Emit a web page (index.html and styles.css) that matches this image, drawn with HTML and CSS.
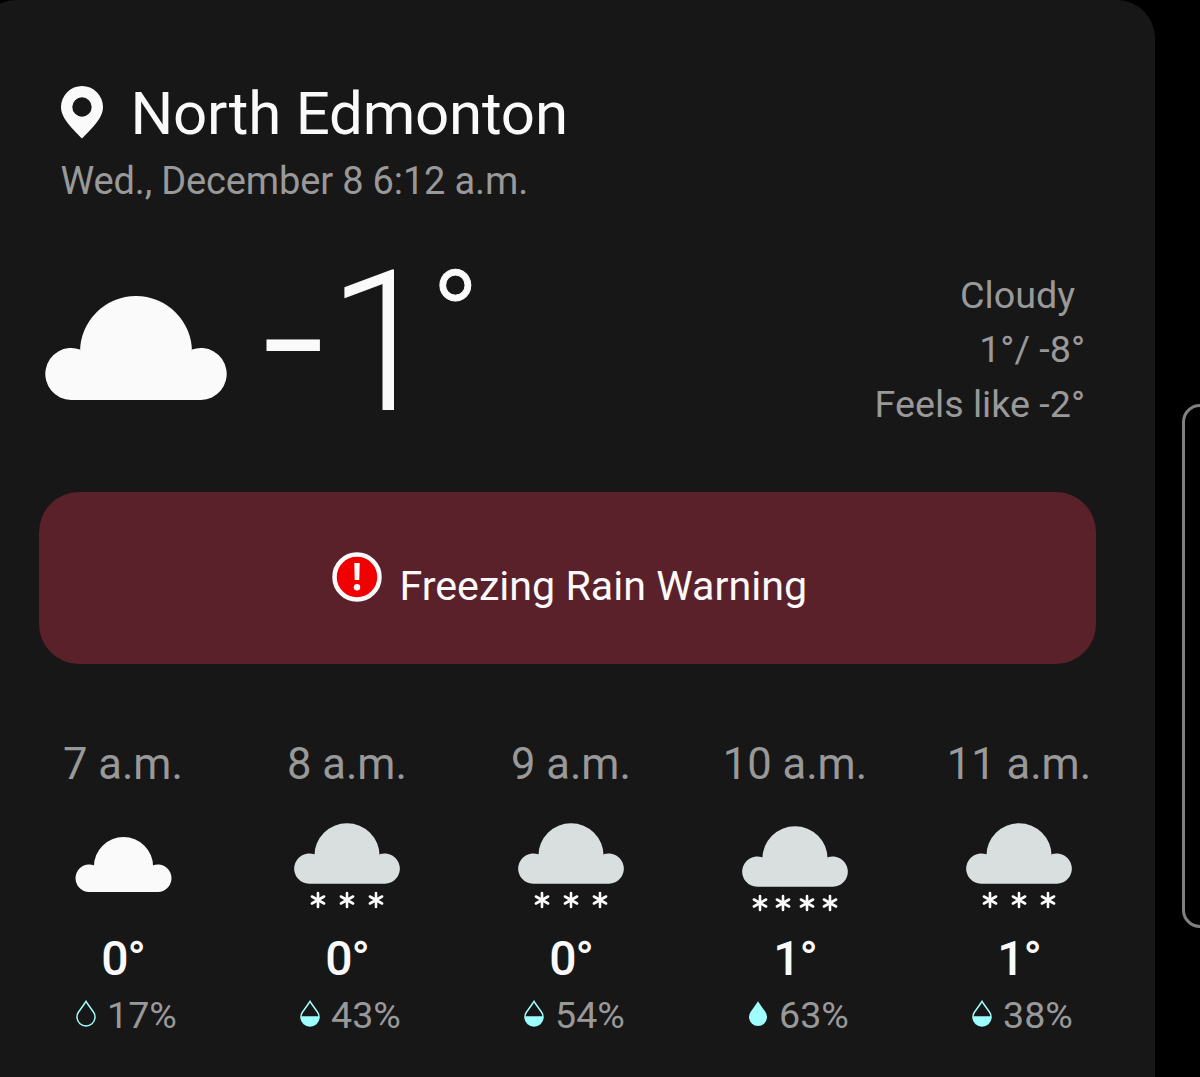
FILE: index.html
```html
<!DOCTYPE html>
<html lang="en">
<head>
    <meta charset="UTF-8">
    <meta name="viewport" content="width=device-width, initial-scale=1.0">
    <title>Weather - North Edmonton</title>
    <link rel="stylesheet" href="styles.css">
</head>
<body>
    <!-- Shared icon shapes -->
    <svg class="icon-defs" width="0" height="0">
        <symbol id="cloud" viewBox="0 0 182 104">
            <path d="M26 104A26 26 0 1 1 35 53.5V56A56 56 0 0 1 147 56V53.5A26 26 0 1 1 156 104Z"/>
        </symbol>
        <symbol id="flake" viewBox="-9 -9 18 18">
            <path d="M0-7V7M-6.1-3.5L6.1 3.5M-6.1 3.5L6.1-3.5"/>
        </symbol>
        <symbol id="drop" viewBox="0 0 20 27">
            <path d="M10 1.3C8 4.500 5 8.500 2.700 11.800A9 9 0 1 0 17.300 11.800C15 8.500 12 4.500 10 1.300Z"/>
        </symbol>
    </svg>

    <main class="weather-card">
        <header class="location">
            <h1 class="city">
                <svg class="pin" viewBox="0 0 42 53">
                    <path fill-rule="evenodd" d="M21 0A21 21 0 0 0 0 21C0 33 13 44 21 52.500C29 44 42 33 42 21A21 21 0 0 0 21 0ZM21 11.300A9.700 9.700 0 1 1 21 30.700A9.700 9.700 0 0 1 21 11.300Z"/>
                </svg>
                North Edmonton
            </h1>
            <p class="date">Wed., December 8 6:12 a.m.</p>
        </header>

        <section class="current">
            <svg class="current-icon"><use href="#cloud"/></svg>
            <div class="current-temp"><span class="minus">-</span><span class="value">1</span><span class="degree">°</span></div>
            <div class="details">
                <p class="condition">Cloudy</p>
                <p>1°/ -8°</p>
                <p>Feels like -2°</p>
            </div>
        </section>

        <section class="alert">
            <svg class="alert-icon" viewBox="0 0 50 50">
                <circle cx="25" cy="25" r="22.500"/>
                <path d="M22.300 11h5.400l-.4 17h-4.600z"/>
                <circle class="dot" cx="25" cy="35.200" r="3.200"/>
            </svg>
            <span>Freezing Rain Warning</span>
        </section>

        <section class="hourly">
            <div class="hour">
                <p class="time">7 a.m.</p>
                <div class="hour-icon">
                    <svg class="cloud-small"><use href="#cloud"/></svg>
                </div>
                <p class="temp">0°</p>
                <p class="rain"><svg class="drop"><use href="#drop"/></svg>17%</p>
            </div>
            <div class="hour">
                <p class="time">8 a.m.</p>
                <div class="hour-icon">
                    <svg class="cloud-snow"><use href="#cloud"/></svg>
                    <div class="flakes">
                        <svg><use href="#flake"/></svg><svg><use href="#flake"/></svg><svg><use href="#flake"/></svg>
                    </div>
                </div>
                <p class="temp">0°</p>
                <p class="rain"><svg class="drop half" viewBox="0 0 20 27"><use href="#drop"/><path d="M1 16.300V17A9 9 0 0 0 19 17V16.300Z"/></svg>43%</p>
            </div>
            <div class="hour">
                <p class="time">9 a.m.</p>
                <div class="hour-icon">
                    <svg class="cloud-snow"><use href="#cloud"/></svg>
                    <div class="flakes">
                        <svg><use href="#flake"/></svg><svg><use href="#flake"/></svg><svg><use href="#flake"/></svg>
                    </div>
                </div>
                <p class="temp">0°</p>
                <p class="rain"><svg class="drop half" viewBox="0 0 20 27"><use href="#drop"/><path d="M1 16.300V17A9 9 0 0 0 19 17V16.300Z"/></svg>54%</p>
            </div>
            <div class="hour">
                <p class="time">10 a.m.</p>
                <div class="hour-icon heavy">
                    <svg class="cloud-snow"><use href="#cloud"/></svg>
                    <div class="flakes">
                        <svg><use href="#flake"/></svg><svg><use href="#flake"/></svg><svg><use href="#flake"/></svg><svg><use href="#flake"/></svg>
                    </div>
                </div>
                <p class="temp">1°</p>
                <p class="rain"><svg class="drop full"><use href="#drop"/></svg>63%</p>
            </div>
            <div class="hour">
                <p class="time">11 a.m.</p>
                <div class="hour-icon">
                    <svg class="cloud-snow"><use href="#cloud"/></svg>
                    <div class="flakes">
                        <svg><use href="#flake"/></svg><svg><use href="#flake"/></svg><svg><use href="#flake"/></svg>
                    </div>
                </div>
                <p class="temp">1°</p>
                <p class="rain"><svg class="drop half" viewBox="0 0 20 27"><use href="#drop"/><path d="M1 16.300V17A9 9 0 0 0 19 17V16.300Z"/></svg>38%</p>
            </div>
        </section>
    </main>

    <aside class="next-panel"></aside>
</body>
</html>
```

FILE: styles.css
```css
* {
    margin: 0;
    padding: 0;
    box-sizing: border-box;
}

body {
    display: flex;
    height: 1077px;
    background-color: #000;
    color: #fafafa;
    font-family: Roboto, sans-serif;
    overflow: hidden;
}

svg {
    display: block;
    flex-shrink: 0;
}

.icon-defs {
    display: none;
}

.weather-card {
    flex: 0 0 1177px;
    height: 1077px;
    margin-left: -22px;
    padding: 84px 24px 0 33px;
    background-color: #171717;
    border-radius: 38px 38px 0 0;
}

/* Location */
.location {
    padding-left: 49.5px;
}

.city {
    display: flex;
    align-items: center;
    gap: 28px;
    font-size: 60px;
    line-height: 60px;
    letter-spacing: -0.2px;
    font-weight: 400;
    white-space: nowrap;
}

.pin {
    width: 42px;
    height: 53px;
    margin-top: -4px;
    fill: #fafafa;
}

.date {
    margin-top: 17px;
    font-size: 38px;
    line-height: 40px;
    letter-spacing: -0.15px;
    color: #999;
}

/* Current conditions */
.current {
    display: flex;
    height: 180px;
    margin-top: 52px;
    padding: 0 46px 0 34px;
}

.current-icon {
    width: 182px;
    height: 104px;
    margin-top: 43px;
    fill: #fafafa;
}

.current-temp {
    display: flex;
    margin-left: 34px;
    font-size: 197px;
    line-height: 180px;
    font-weight: 300;
}

.minus {
    font-size: 228px;
    line-height: 172px;
}

.value {
    margin-left: 1px;
    letter-spacing: -6px;
}

.degree {
    font-size: 130px;
    line-height: 131px;
    -webkit-text-stroke: 1px #fafafa;
}

.details {
    margin-left: auto;
    padding-top: 15px;
    font-size: 37.7px;
    line-height: 54.4px;
    text-align: right;
    color: #999;
}

.condition {
    padding-right: 10px;
}

/* Warning banner */
.alert {
    display: flex;
    justify-content: center;
    align-items: center;
    gap: 17.5px;
    width: 1057px;
    height: 172px;
    margin: 59px 0 0 28px;
    padding: 16px 0 0 4px;
    background-color: #5a212a;
    border-radius: 40px;
    font-size: 41.2px;
    line-height: 48px;
}

.alert-icon {
    width: 50px;
    height: 50px;
    margin-top: -18px;
    fill: #fafafa;
}

.alert-icon circle {
    fill: #f00000;
    stroke: #fafafa;
    stroke-width: 4.5;
}

.alert-icon .dot {
    fill: #fafafa;
    stroke: none;
}

/* Hourly forecast */
.hourly {
    display: grid;
    grid-template-columns: repeat(5, 224px);
    margin-top: 79px;
}

.hour {
    display: flex;
    flex-direction: column;
    align-items: center;
}

.time {
    font-size: 43.5px;
    line-height: 44px;
    color: #999;
}

.hour-icon {
    display: flex;
    flex-direction: column;
    align-items: center;
    height: 96px;
    margin-top: 36px;
}

.hour-icon.heavy {
    padding-top: 3px;
}

.cloud-small {
    width: 97px;
    height: 55px;
    margin-top: 14px;
    fill: #fafafa;
}

.cloud-snow {
    width: 106px;
    height: 61px;
    fill: #d9dfdf;
}

.flakes {
    display: flex;
    gap: 11.4px;
    margin-top: 6.5px;
}

.heavy .flakes {
    gap: 5.6px;
}

.flakes svg {
    width: 18px;
    height: 18px;
    fill: none;
    stroke: #fafafa;
    stroke-width: 2.6;
    stroke-linecap: round;
}

.temp {
    margin-top: 16px;
    font-size: 48px;
    line-height: 48px;
    letter-spacing: -1px;
    font-weight: 500;
}

.rain {
    display: flex;
    align-items: center;
    gap: 11px;
    margin-top: 12px;
    padding-left: 7px;
    font-size: 37.6px;
    line-height: 40px;
    color: #999;
}

.drop {
    width: 20px;
    height: 27px;
    margin-top: -4px;
    fill: none;
    stroke: #a0fdfd;
    stroke-width: 1.5;
}

.half path {
    fill: #a0fdfd;
    stroke: none;
}

.full {
    fill: #a0fdfd;
    stroke: none;
}

/* Edge of the neighbouring panel */
.next-panel {
    flex: 0 0 60px;
    height: 524px;
    margin: 404px 0 0 27px;
    border: 3px solid #808080;
    border-radius: 18px;
}
```
